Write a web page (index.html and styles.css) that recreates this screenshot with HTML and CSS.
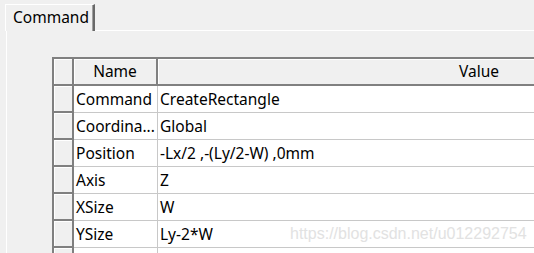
FILE: index.html
```html
<!DOCTYPE html>
<html lang="en">
<head>
  <meta charset="UTF-8" />
  <title>Command</title>
  <link rel="stylesheet" href="styles.css">
</head>
<body>

  <div class="tabs">
    <div class="tab">Command</div>
    <div class="tab-rest"></div>
  </div>

  <div class="panel">
    <div class="grid">
      <div class="corner"></div>
      <div class="head">Name</div>
      <div class="head">Value</div>

      <div class="rowhead"></div>
      <div class="cell">Command</div>
      <div class="cell">CreateRectangle</div>

      <div class="rowhead"></div>
      <div class="cell">Coordina...</div>
      <div class="cell">Global</div>

      <div class="rowhead"></div>
      <div class="cell">Position</div>
      <div class="cell">-Lx/2 ,-(Ly/2-W) ,0mm</div>

      <div class="rowhead"></div>
      <div class="cell">Axis</div>
      <div class="cell">Z</div>

      <div class="rowhead"></div>
      <div class="cell">XSize</div>
      <div class="cell">W</div>

      <div class="rowhead"></div>
      <div class="cell">YSize</div>
      <div class="cell">Ly-2*W</div>

      <div class="rowhead"></div>
      <div class="cell"></div>
      <div class="cell"></div>
    </div>

    <!-- blog watermark on top of the screenshot -->
    <div class="watermark">https://blog.csdn.net/u012292754</div>
  </div>

</body>
</html>
```

FILE: styles.css
```css
body {
  margin: 0;
  width: 534px;
  height: 253px;
  overflow: hidden;
  background-color: #f0f0f0;
  font-family: 'Noto Sans', sans-serif;
  font-size: 15.5px;
  color: #000;
}

.tabs {
  display: flex;
  align-items: flex-end;
  padding: 4px 0 0 5px;
}

.tab {
  width: 90px;
  height: 27px;
  padding-left: 7px;
  line-height: 25px;
  border-top: 1px solid #fff;
  border-left: 1px solid #fff;
  border-right: 2px solid #696969;
  box-shadow: inset -1px 0 0 #a0a0a0;
  box-sizing: border-box;
}

.tab-rest {
  flex: 1;
  border-bottom: 1px solid #fff;
}

.panel {
  position: relative;
  margin-left: 6px;
  height: 260px;
  border-left: 1px solid #fff;
  padding: 26px 0 0 45px;
}

.grid {
  display: grid;
  grid-template-columns: 20px 84px 644px;
  grid-template-rows: 27px;
  grid-auto-rows: 27px;
  width: 750px;
  border-top: 2px solid #808080;
  border-left: 2px solid #808080;
  box-shadow: inset 1px 1px 0 #a0a0a0;
}

.corner,
.rowhead {
  background-color: #f0f0f0;
  border-right: 2px solid #808080;
  border-bottom: 2px solid #808080;
  box-shadow: inset 1px 1px 0 #fff;
}

.head {
  background-color: #f0f0f0;
  border-right: 2px solid #808080;
  border-bottom: 2px solid #808080;
  box-shadow: inset 1px 1px 0 #fff;
  text-align: center;
  line-height: 24px;
}

.cell {
  background-color: #fff;
  border-right: 1px solid #c8c8c8;
  border-bottom: 1px solid #c8c8c8;
  padding-left: 2px;
  line-height: 26px;
  white-space: nowrap;
  overflow: hidden;
}

.watermark {
  position: absolute;
  left: 283px;
  top: 194px;
  font-family: 'Liberation Sans', Arial, sans-serif;
  font-size: 16px;
  color: #e2e2e2;
}
```
